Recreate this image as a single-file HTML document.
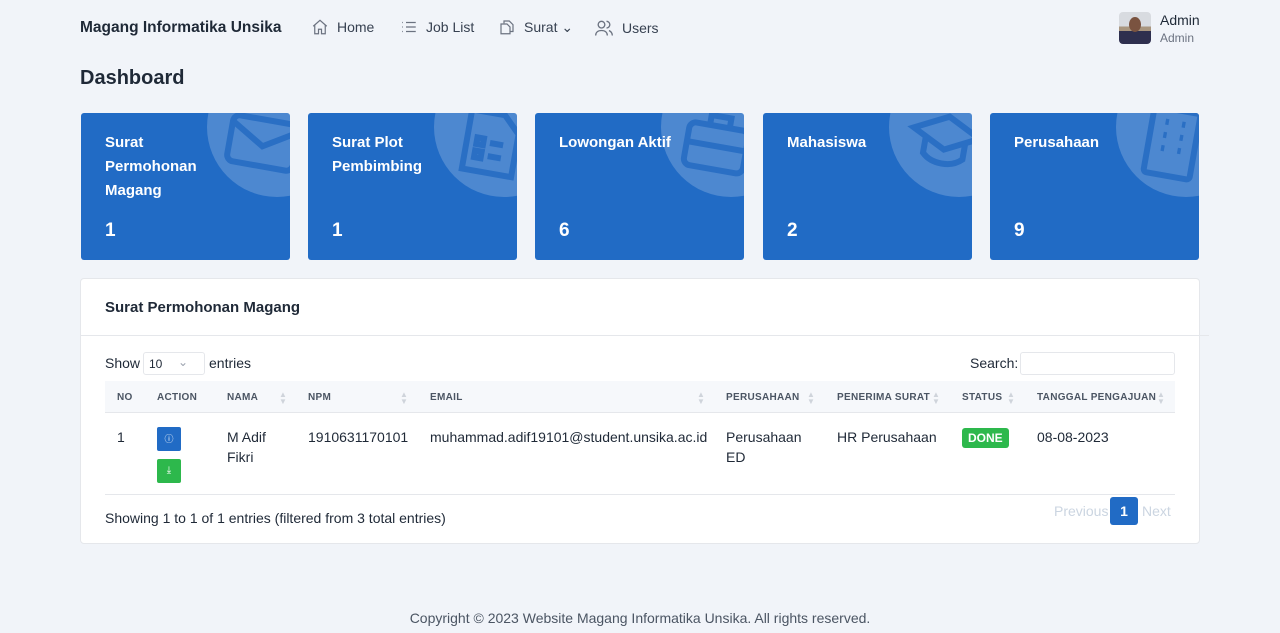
<!DOCTYPE html>
<html><head><meta charset="utf-8"><style>
*{box-sizing:border-box;margin:0;padding:0}
body{width:1280px;height:633px;background:#f1f4f9;font-family:"Liberation Sans",sans-serif;color:#1f2937;position:relative;overflow:hidden;font-size:14px}
.a{position:absolute}
.nav{font-size:14px;color:#374151;display:flex;align-items:center;gap:8px}
.card{position:absolute;top:113px;width:209px;height:147px;background:#216bc5;border-radius:3px;overflow:hidden;color:#fff}
.card .t{position:absolute;left:24px;top:18px;font-weight:bold;font-size:15px;line-height:24px}
.card .n{position:absolute;left:24px;top:107px;font-weight:bold;font-size:19px}
.card .c{position:absolute;left:126px;top:-56px;width:140px;height:140px;border-radius:50%;background:rgba(255,255,255,.2)}
.card svg{position:absolute;left:142px;top:-10px}
th{font-size:10px;color:#4b5563;font-weight:bold;text-align:left;letter-spacing:.3px;height:32px}
td{font-size:14px;vertical-align:top;padding-top:14px;line-height:20px}
.s{position:absolute;font-size:8px;color:#cfd4db;line-height:7px}
</style></head><body>
<div class="a" style="left:80px;top:19px;font-size:15.5px;font-weight:bold;color:#1f2937">Magang Informatika Unsika</div>
<div class="a nav" style="left:311px;top:18px"><svg width="18" height="18" viewBox="0 0 24 24" fill="none" stroke="#6b7280" stroke-width="1.6"><path d="M3 11l9-8 9 8M5 9.5V21h5v-6h4v6h5V9.5"/></svg><span>Home</span></div>
<div class="a nav" style="left:400px;top:18px"><svg width="18" height="18" viewBox="0 0 24 24" fill="none" stroke="#6b7280" stroke-width="1.6"><path d="M8 6h13M8 12h13M8 18h13M3 6h1M3 12h1M3 18h1"/></svg><span>Job List</span></div>
<div class="a nav" style="left:498px;top:18px"><svg width="18" height="18" viewBox="0 0 24 24" fill="none" stroke="#6b7280" stroke-width="1.6"><path d="M8 7V4h7l5 5v9h-4M4 8h8l4 4v9H4z"/></svg><span>Surat ⌄</span></div>
<div class="a nav" style="left:594px;top:18px"><svg width="20" height="20" viewBox="0 0 24 24" fill="none" stroke="#6b7280" stroke-width="1.6"><circle cx="9" cy="8" r="4"/><path d="M2 21c0-4 3-6 7-6s7 2 7 6M15 4a4 4 0 010 8M18 15c2 1 4 3 4 6"/></svg><span>Users</span></div>
<div class="a" style="left:1119px;top:12px;width:32px;height:32px;border-radius:4px;background:linear-gradient(#d8dbe0 0 45%,#a9967f 45% 60%,#2e2f4e 60%);overflow:hidden"><div style="position:absolute;left:10px;top:5px;width:12px;height:15px;border-radius:50%;background:#7a5340"></div></div>
<div class="a" style="left:1160px;top:12px;font-size:14px;color:#1f2937">Admin</div>
<div class="a" style="left:1160px;top:31px;font-size:12px;color:#6b7280">Admin</div>
<div class="a" style="left:80px;top:67px;font-size:20px;font-weight:bold;color:#1f2937">Dashboard</div>

<div class="card" style="left:81px"><div class="c"></div><svg width="80" height="80" viewBox="0 0 24 24" fill="none" stroke="#2a6fc4" stroke-width="1.8" transform="rotate(10)"><rect x="2" y="5" width="20" height="14" rx="2"/><path d="M2 7l10 6 10-6"/></svg><div class="t">Surat<br>Permohonan<br>Magang</div><div class="n">1</div></div>
<div class="card" style="left:308px"><div class="c"></div><svg width="80" height="80" viewBox="0 0 24 24" fill="none" stroke="#2a6fc4" stroke-width="1.8" transform="rotate(10)"><path d="M5 3h10l5 5v13H5z"/><rect x="8" y="11" width="2" height="2"/><rect x="8" y="15" width="2" height="2"/><path d="M12 12h4M12 16h4"/></svg><div class="t">Surat Plot<br>Pembimbing</div><div class="n">1</div></div>
<div class="card" style="left:535px"><div class="c"></div><svg width="80" height="80" viewBox="0 0 24 24" fill="none" stroke="#2a6fc4" stroke-width="1.8" transform="rotate(10)"><rect x="3" y="7" width="18" height="13" rx="2"/><path d="M9 7V4h6v3M3 13h18"/></svg><div class="t">Lowongan Aktif</div><div class="n">6</div></div>
<div class="card" style="left:763px"><div class="c"></div><svg width="80" height="80" viewBox="0 0 24 24" fill="none" stroke="#2a6fc4" stroke-width="1.8" transform="rotate(10)"><path d="M2 9l10-5 10 5-10 5zM6 11v5c3 3 9 3 12 0v-5"/></svg><div class="t">Mahasiswa</div><div class="n">2</div></div>
<div class="card" style="left:990px"><div class="c"></div><svg width="80" height="80" viewBox="0 0 24 24" fill="none" stroke="#2a6fc4" stroke-width="1.8" transform="rotate(10)"><rect x="5" y="2" width="14" height="20" rx="1"/><path d="M9 6h1M14 6h1M9 10h1M14 10h1M9 14h1M14 14h1"/></svg><div class="t">Perusahaan</div><div class="n">9</div></div>

<div class="a" style="left:80px;top:278px;width:1120px;height:266px;background:#fff;border:1px solid #e5e7eb;border-radius:4px"></div>
<div class="a" style="left:81px;top:335px;width:1128px;height:1px;background:#e5e7eb"></div>
<div class="a" style="left:105px;top:299px;font-size:15px;font-weight:bold;color:#1f2937">Surat Permohonan Magang</div>
<div class="a" style="left:105px;top:355px;font-size:14px">Show</div>
<div class="a" style="left:143px;top:352px;width:62px;height:23px;border:1px solid #e5e7eb;border-radius:3px;font-size:12px;padding:4px 5px">10 <span style="position:absolute;left:34px;top:2px;color:#9ca3af">⌄</span></div>
<div class="a" style="left:209px;top:355px;font-size:14px">entries</div>
<div class="a" style="left:970px;top:355px;font-size:14px">Search:</div>
<div class="a" style="left:1020px;top:352px;width:155px;height:23px;border:1px solid #e5e7eb;border-radius:3px"></div>
<div class="a" style="left:105px;top:381px;width:1070px;height:32px;background:#f6f8fb;border-bottom:1px solid #e5e7eb"></div>
<div class="a" style="left:105px;top:494px;width:1070px;height:1px;background:#e5e7eb"></div>
<table class="a" style="left:105px;top:381px;width:1070px;border-collapse:collapse">
<tr><th style="width:52px;padding-left:12px">NO</th><th style="width:70px">ACTION</th><th style="width:81px">NAMA</th><th style="width:122px">NPM</th><th style="width:296px">EMAIL</th><th style="width:111px">PERUSAHAAN</th><th style="width:125px">PENERIMA SURAT</th><th style="width:75px">STATUS</th><th>TANGGAL PENGAJUAN</th></tr>
<tr><td style="padding-left:12px">1</td><td><div style="width:24px;height:24px;background:#216bc5;border-radius:2px;margin-top:0px;color:#fff;font-size:9px;text-align:center;line-height:24px">ⓘ</div><div style="width:24px;height:24px;background:#2db84c;border-radius:2px;margin-top:8px;color:#fff;font-size:10px;text-align:center;line-height:24px">⤓</div></td><td>M Adif<br>Fikri</td><td>1910631170101</td><td>muhammad.adif19101@student.unsika.ac.id</td><td>Perusahaan<br>ED</td><td>HR Perusahaan</td><td><span style="display:inline-block;background:#2db84c;color:#fff;font-weight:bold;font-size:12px;padding:0 6px;line-height:20px;border-radius:3px">DONE</span></td><td>08-08-2023</td></tr>
</table>
<div class="s" style="left:279px;top:391px">▲<br>▼</div><div class="s" style="left:400px;top:391px">▲<br>▼</div><div class="s" style="left:697px;top:391px">▲<br>▼</div><div class="s" style="left:807px;top:391px">▲<br>▼</div><div class="s" style="left:932px;top:391px">▲<br>▼</div><div class="s" style="left:1007px;top:391px">▲<br>▼</div><div class="s" style="left:1157px;top:391px">▲<br>▼</div>
<div class="a" style="left:105px;top:510px;font-size:14px">Showing 1 to 1 of 1 entries (filtered from 3 total entries)</div>
<div class="a" style="left:1054px;top:503px;font-size:14px;color:#cbd5e1">Previous</div>
<div class="a" style="left:1110px;top:497px;width:28px;height:28px;background:#216bc5;border-radius:3px;color:#fff;text-align:center;line-height:28px;font-size:14px;font-weight:bold">1</div>
<div class="a" style="left:1142px;top:503px;font-size:14px;color:#cbd5e1">Next</div>
<div class="a" style="left:0;width:1280px;top:610px;text-align:center;font-size:14px;color:#4b5563">Copyright © 2023 Website Magang Informatika Unsika. All rights reserved.</div>
</body></html>
